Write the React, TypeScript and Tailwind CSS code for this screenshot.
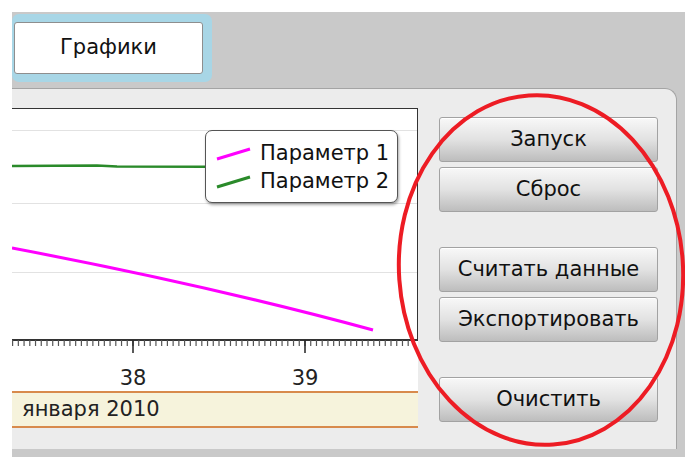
import React from 'react';

const font = { fontFamily: '"DejaVu Sans", Verdana, sans-serif' };

// minor ticks every 1/30 of a day, major on whole days
const minorTicks: number[] = [];
for (let k = -21; k <= 49; k++) {
  const x = 121 + k * (172 / 30);
  if (x >= 0 && x <= 404) minorTicks.push(x);
}

const buttons: { label: string; gap: string }[] = [
  { label: 'Запуск', gap: '' },
  { label: 'Сброс', gap: 'mt-[5px]' },
  { label: 'Считать данные', gap: 'mt-[35px]' },
  { label: 'Экспортировать', gap: 'mt-[5px]' },
  { label: 'Очистить', gap: 'mt-[35px]' },
];

const Chart: React.FC = () => (
  <div className="relative w-[406px] h-[283px] bg-white">
    <svg width="406" height="283" className="block">
      {/* grid */}
      <line x1="0" y1="22.5" x2="405" y2="22.5" stroke="#e2e2e2" />
      <line x1="0" y1="95.5" x2="405" y2="95.5" stroke="#e2e2e2" />
      <line x1="0" y1="164.5" x2="405" y2="164.5" stroke="#e2e2e2" />
      {/* frame */}
      <line x1="0" y1="0.5" x2="406" y2="0.5" stroke="#333" />
      <line x1="405.5" y1="0" x2="405.5" y2="232" stroke="#333" />
      {/* series */}
      <path d="M0,58 L85,57.6 L105,58.6 L195,58.8" fill="none" stroke="#2a8a2a" strokeWidth="2.5" />
      <path d="M0,140 Q195,177 361,222" fill="none" stroke="#ff00ff" strokeWidth="3" />
      {/* time axis */}
      <line x1="0" y1="232" x2="406" y2="232" stroke="#333" strokeWidth="2" />
      {minorTicks.map((x) => (
        <line key={x} x1={x} y1="232" x2={x} y2="238" stroke="#555" strokeWidth="1.2" />
      ))}
      <line x1="121" y1="232" x2="121" y2="245" stroke="#222" strokeWidth="1.5" />
      <line x1="293" y1="232" x2="293" y2="245" stroke="#222" strokeWidth="1.5" />
      <text x="121" y="277" textAnchor="middle" fontSize="21" fill="#222" style={font}>38</text>
      <text x="293" y="277" textAnchor="middle" fontSize="21" fill="#222" style={font}>39</text>
    </svg>

    {/* legend */}
    <div className="absolute left-[193px] top-[22px] w-[193px] h-[73px] bg-white border border-[#555] rounded-[7px] shadow-[1px_2px_3px_rgba(0,0,0,0.35)] flex flex-col justify-center gap-[2px]">
      <div className="flex items-center">
        <svg width="54" height="20" className="shrink-0">
          <line x1="11" y1="16" x2="44" y2="6" stroke="#ff00ff" strokeWidth="3" />
        </svg>
        <span className="text-[21px] leading-[26px] text-[#111]">Параметр 1</span>
      </div>
      <div className="flex items-center">
        <svg width="54" height="20" className="shrink-0">
          <line x1="11" y1="16" x2="44" y2="6" stroke="#2a8a2a" strokeWidth="3" />
        </svg>
        <span className="text-[21px] leading-[26px] text-[#111]">Параметр 2</span>
      </div>
    </div>
  </div>
);

const App: React.FC = () => {
  return (
    <div className="relative w-[685px] h-[457px] overflow-hidden bg-white pl-[12px] pt-[12px]" style={font}>
      <div className="h-full bg-[#c9c9c9] flex flex-col">
        {/* tab strip */}
        <div className="h-[76px] pt-[2px]">
          <div className="w-[200px] h-[68px] rounded-[7px] bg-[#a8d6e6] pl-[2px] pt-[8px]">
            <div className="w-[189px] h-[52px] rounded-[3px] bg-white border border-[#8e8e8e] flex items-center justify-center text-[21px] text-[#111]">
              Графики
            </div>
          </div>
        </div>

        {/* page */}
        <div className="h-[361px] mr-[8px] bg-[#ececec] border-t border-r border-[#a4a4a4] rounded-tr-[12px] flex">
          <div className="w-[406px] pt-[19px] flex flex-col">
            <Chart />
            <div className="h-[37px] bg-[#f6f3dc] border-y-2 border-[#d88a4c] flex items-center pl-[10px] text-[21px] text-[#222]">
              января 2010
            </div>
          </div>

          <div className="ml-[21px] pt-[28px] w-[219px] flex flex-col">
            {buttons.map((b) => (
              <button
                key={b.label}
                className={`${b.gap} h-[45px] w-full rounded-[3px] border border-[#a2a2a2] bg-linear-to-b from-[#f8f8f8] via-[#e2e2e2] to-[#bdbdbd] text-[21px] text-[#111] shadow-[inset_0_1px_0_#ffffff]`}
              >
                {b.label}
              </button>
            ))}
          </div>
        </div>
      </div>

      {/* red marker around the control column */}
      <svg className="absolute inset-0 pointer-events-none" width="685" height="457">
        <ellipse cx="541" cy="270" rx="142" ry="175" fill="none" stroke="#ed1c24" strokeWidth="4" transform="rotate(-4 541 270)" />
      </svg>
    </div>
  );
};

export default App;
